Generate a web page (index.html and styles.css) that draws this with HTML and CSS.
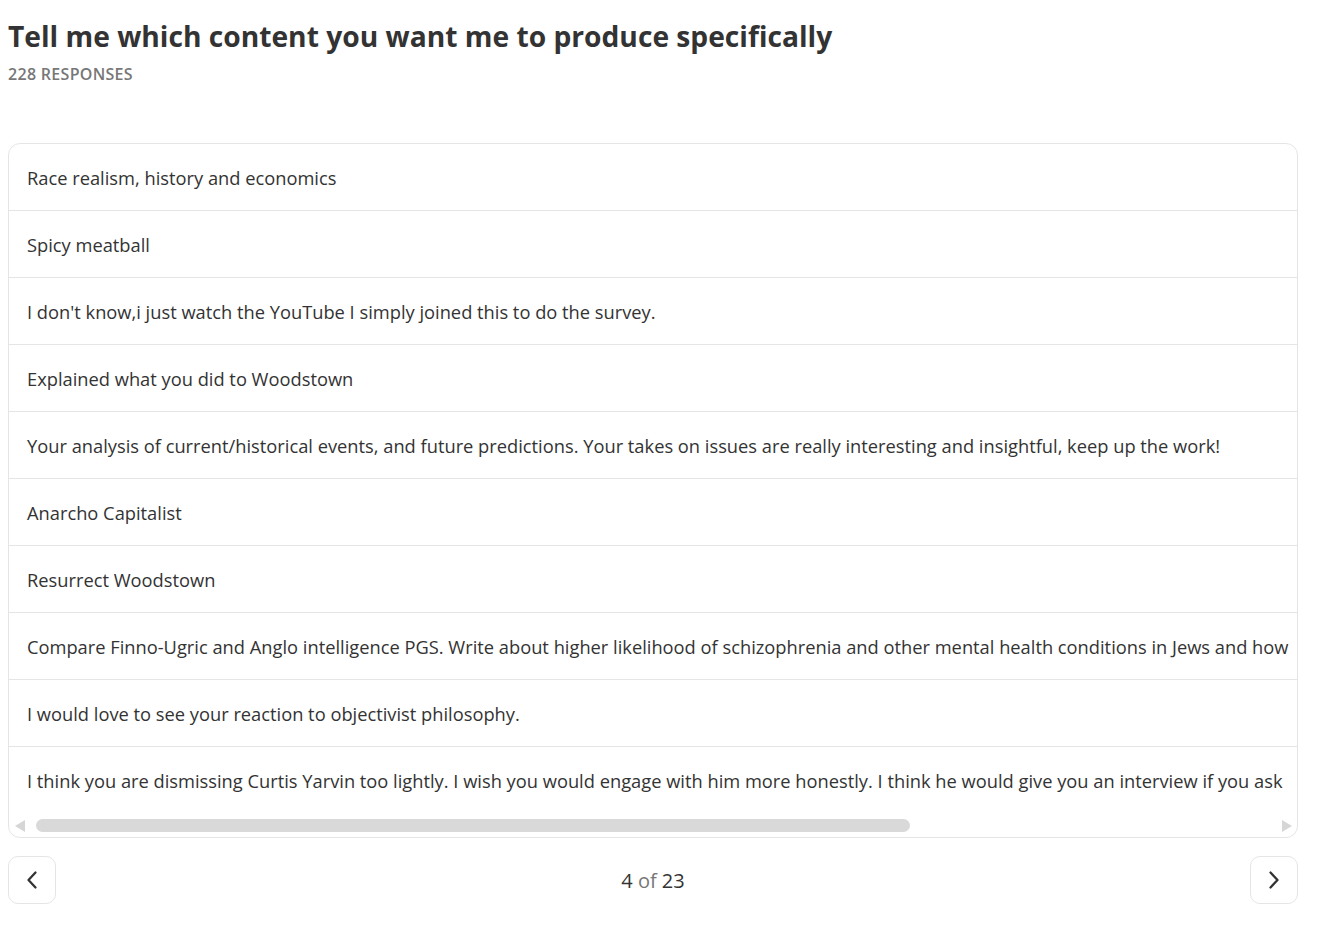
FILE: index.html
```html
<!DOCTYPE html>
<html>
<head>
<meta charset="utf-8">
<link rel="stylesheet" href="styles.css">
</head>
<body>
<div class="page">
  <h1 class="title">Tell me which content you want me to produce specifically</h1>
  <div class="count">228 RESPONSES</div>

  <div class="card">
    <div class="rows">
      <div class="row">Race realism, history and economics</div>
      <div class="row">Spicy meatball</div>
      <div class="row">I don't know,i just watch the YouTube I simply joined this to do the survey.</div>
      <div class="row">Explained what you did to Woodstown</div>
      <div class="row">Your analysis of current/historical events, and future predictions. Your takes on issues are really interesting and insightful, keep up the work!</div>
      <div class="row">Anarcho Capitalist</div>
      <div class="row">Resurrect Woodstown</div>
      <div class="row">Compare Finno-Ugric and Anglo intelligence PGS. Write about higher likelihood of schizophrenia and other mental health conditions in Jews and how</div>
      <div class="row">I would love to see your reaction to objectivist philosophy.</div>
      <div class="row">I think you are dismissing Curtis Yarvin too lightly. I wish you would engage with him more honestly. I think he would give you an interview if you ask</div>
    </div>
    <div class="scrollbar">
      <span class="arrow arrow-left"></span>
      <div class="track"><div class="thumb" style="width: 874px"></div></div>
      <span class="arrow arrow-right"></span>
    </div>
  </div>

  <div class="pager">
    <button class="nav-btn" aria-label="Previous">
      <svg width="20" height="20" viewBox="0 0 20 20"><path d="M13.5 2.5 L6.5 10 L13.5 17.5" fill="none" stroke="#333" stroke-width="2.3" stroke-linecap="round" stroke-linejoin="round"/></svg>
    </button>
    <div class="page-label"><span class="num">4</span> <span class="of">of</span> <span class="num">23</span></div>
    <button class="nav-btn" aria-label="Next">
      <svg width="20" height="20" viewBox="0 0 20 20"><path d="M6.5 2.5 L13.5 10 L6.5 17.5" fill="none" stroke="#333" stroke-width="2.3" stroke-linecap="round" stroke-linejoin="round"/></svg>
    </button>
  </div>
</div>
</body>
</html>
```

FILE: styles.css
```css
* { box-sizing: border-box; }
html, body { margin: 0; padding: 0; background: #fff; }
body {
  font-family: "Open Sans", "Noto Sans", "Liberation Sans", sans-serif;
  color: #333;
}
.page {
  width: 1290px;
  margin-left: 8px;
  padding-top: 17px;
}
.title {
  margin: 0;
  font-size: 28.2px;
  line-height: 38px;
  font-weight: 700;
  color: #333;
}
.count {
  margin-top: 8px;
  font-size: 16px;
  line-height: 22px;
  font-weight: 600;
  letter-spacing: 0.3px;
  color: #777;
}
.card {
  margin-top: 58px;
  border: 1px solid #e5e5e5;
  border-radius: 12px;
  overflow: hidden;
}
.rows {
  display: flex;
  flex-direction: column;
}
.row {
  height: 67px;
  display: flex;
  align-items: center;
  padding: 0 18px;
  font-size: 18.3px;
  white-space: nowrap;
  color: #333;
  border-bottom: 1px solid #e5e5e5;
  width: 1830px;
}
.row:last-child { border-bottom: none; }
.scrollbar {
  height: 23px;
  display: flex;
  align-items: center;
  padding: 0 5px;
}
.arrow {
  width: 0; height: 0;
  border-top: 6px solid transparent;
  border-bottom: 6px solid transparent;
}
.arrow-left { border-right: 10px solid #d6d6d6; margin-left: 1px; }
.arrow-right { border-left: 10px solid #d6d6d6; }
.track {
  flex: 1;
  height: 13px;
  padding: 0 11px;
}
.thumb {
  height: 13px;
  border-radius: 7px;
  background: #d9d9d9;
}
.pager {
  margin-top: 18px;
  display: flex;
  align-items: center;
  justify-content: space-between;
}
.nav-btn {
  width: 48px;
  height: 48px;
  border: 1px solid #e5e5e5;
  border-radius: 10px;
  background: #fff;
  display: flex;
  align-items: center;
  justify-content: center;
  padding: 0;
}
.page-label {
  font-size: 20px;
  color: #333;
}
.page-label .of { color: #777; }
```
